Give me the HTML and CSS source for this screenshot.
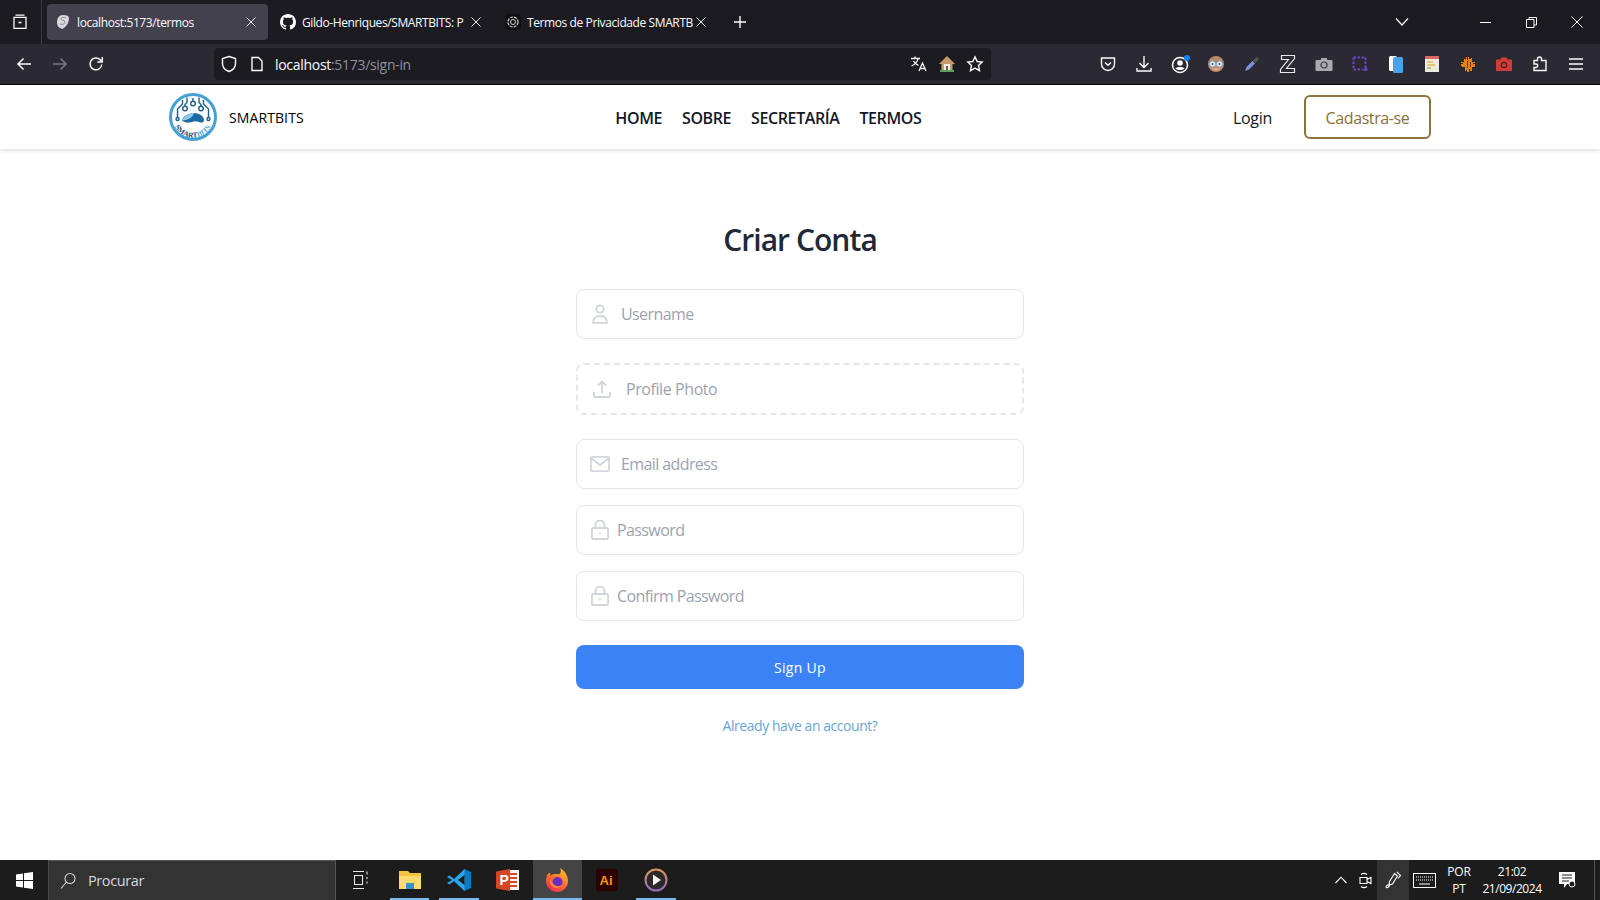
FILE: index.html
```html
<!DOCTYPE html>
<html lang="pt">
<head>
<meta charset="utf-8">
<title>SMARTBITS</title>
<link rel="stylesheet" href="styles.css">
</head>
<body>
<div class="screen">
  <header class="browser">
    <div class="tabstrip">
      <div class="tabs-menu">
        <svg width="16" height="16" viewBox="0 0 16 16" fill="none" stroke="#fbfbfe" stroke-width="1.3"><path d="M3.500 1.200h9M2 3.400h12v11H2z"/><path d="M6.500 8.500h3" stroke-width="1.600"/></svg>
      </div>
      <div class="tab tab-active">
        <svg class="fav" width="16" height="16" viewBox="0 0 16 16"><path d="M8 1c4 0 6 1 6 3 0 5-3 9-7 11-3-1-5-3-5-6 0-5 2-8 6-8z" fill="#d8d8de"/><path d="M5 10c2 1 5 0 5-2S6 7 6 5s3-2 5-1" fill="none" stroke="#8b8b93" stroke-width="1"/></svg>
        <span class="tab-title">localhost:5173/termos</span>
        <svg class="tab-close" width="10" height="10" viewBox="0 0 10 10" stroke="#e8e8ea"><path d="M.5.500l9 9M9.500.500l-9 9"/></svg>
      </div>
      <div class="tab">
        <svg class="fav" width="16" height="16" viewBox="0 0 16 16"><path fill="#fbfbfe" d="M8 0C3.58 0 0 3.58 0 8c0 3.54 2.29 6.53 5.47 7.59.4.07.55-.17.55-.38 0-.19-.01-.82-.01-1.49-2.01.37-2.53-.49-2.69-.94-.09-.23-.48-.94-.82-1.13-.28-.15-.68-.52-.01-.53.63-.01 1.08.58 1.23.82.72 1.21 1.87.87 2.33.66.07-.52.28-.87.51-1.07-1.78-.2-3.64-.89-3.64-3.95 0-.87.31-1.59.82-2.15-.08-.2-.36-1.02.08-2.12 0 0 .67-.21 2.2.82.64-.18 1.32-.27 2-.27s1.36.09 2 .27c1.53-1.04 2.2-.82 2.2-.82.44 1.1.16 1.92.08 2.12.51.56.82 1.27.82 2.15 0 3.07-1.87 3.75-3.65 3.95.29.25.54.73.54 1.48 0 1.07-.01 1.93-.01 2.2 0 .21.15.46.55.38A8.013 8.013 0 0016 8c0-4.42-3.58-8-8-8z"/></svg>
        <span class="tab-title">Gildo-Henriques/SMARTBITS: P</span>
        <svg class="tab-close" width="10" height="10" viewBox="0 0 10 10" stroke="#e8e8ea"><path d="M.5.500l9 9M9.500.500l-9 9"/></svg>
      </div>
      <div class="tab">
        <svg class="fav" width="16" height="16" viewBox="0 0 16 16"><rect width="16" height="16" rx="3" fill="#111"/><circle cx="8" cy="8" r="5" fill="none" stroke="#cfcfd4" stroke-width="1.200" stroke-dasharray="3 1"/><circle cx="8" cy="8" r="2.500" fill="none" stroke="#cfcfd4"/></svg>
        <span class="tab-title">Termos de Privacidade SMARTB</span>
        <svg class="tab-close" width="10" height="10" viewBox="0 0 10 10" stroke="#e8e8ea"><path d="M.5.500l9 9M9.500.500l-9 9"/></svg>
      </div>
      <div class="new-tab">
        <svg width="14" height="14" viewBox="0 0 14 14" stroke="#fbfbfe" stroke-width="1.400"><path d="M7 1v12M1 7h12"/></svg>
      </div>
      <div class="tab-list">
        <svg width="14" height="10" viewBox="0 0 14 10" fill="none" stroke="#fbfbfe" stroke-width="1.200"><path d="M1 1.500l6 6.500 6-6.500"/></svg>
      </div>
      <div class="win-btn"><svg width="11" height="11" viewBox="0 0 11 11" stroke="#fbfbfe"><path d="M0 5.500h11"/></svg></div>
      <div class="win-btn"><svg width="11" height="11" viewBox="0 0 11 11" fill="none" stroke="#fbfbfe"><path d="M.5 2.500h7.500v8H.5zM3 2.500V.5h7.500v7.500H8"/></svg></div>
      <div class="win-btn"><svg width="12" height="12" viewBox="0 0 12 12" stroke="#fbfbfe"><path d="M.5.500l11 11M11.500.500l-11 11"/></svg></div>
    </div>
    <div class="toolbar">
      <div class="tool-btn"><svg width="16" height="16" viewBox="0 0 16 16" fill="none" stroke="#fbfbfe" stroke-width="1.500"><path d="M15 8H2M7.500 2.500L2 8l5.500 5.500"/></svg></div>
      <div class="tool-btn"><svg width="16" height="16" viewBox="0 0 16 16" fill="none" stroke="#7b7a82" stroke-width="1.500"><path d="M1 8h13M8.500 2.500L14 8l-5.500 5.500"/></svg></div>
      <div class="tool-btn"><svg width="16" height="16" viewBox="0 0 16 16" fill="none" stroke="#fbfbfe" stroke-width="1.500"><path d="M13.800 8.500A5.900 5.900 0 1 1 12 3.600L14 5.500"/><path d="M14.300 1v5h-5"/></svg></div>
      <div class="urlbar">
        <svg class="url-shield" width="16" height="18" viewBox="0 0 16 18" fill="none" stroke="#fbfbfe" stroke-width="1.400"><path d="M8 1.500l6.500 2v5c0 4-3 6.800-6.500 8-3.500-1.200-6.500-4-6.500-8v-5z"/></svg>
        <svg class="url-page" width="14" height="16" viewBox="0 0 14 16" fill="none" stroke="#fbfbfe" stroke-width="1.400"><path d="M2 1.500h6.500l3.500 3.500v9.500H2z"/></svg>
        <span class="url-text">localhost<span class="url-dim">:5173/sign-in</span></span>
        <div class="url-actions">
          <svg width="18" height="18" viewBox="0 0 18 18" fill="none" stroke="#fbfbfe" stroke-width="1.300"><path d="M1 3.500h9M5 1.500v2M8 3.500c-.5 3-3 6-6.500 7.500M3.500 6c1 2 3 3.500 5 4.500M9 16l3.500-8 3.500 8M10.200 13.500h4.600"/></svg>
          <svg width="18" height="18" viewBox="0 0 18 18"><path d="M9 1L1 9h2.500v6h11V9H17z" fill="#c99a6b"/><path d="M6 9h6v6H6z" fill="#f4efe6"/><path d="M8 11h2v4H8z" fill="#6c5a45"/><path d="M2 15h14v2H2z" fill="#5aa35a"/></svg>
          <svg width="18" height="18" viewBox="0 0 18 18" fill="none" stroke="#fbfbfe" stroke-width="1.400"><path d="M9 1.800l2.200 4.700 5 .6-3.700 3.500 1 5L9 13.100l-4.500 2.500 1-5L1.800 7.100l5-.6z"/></svg>
        </div>
      </div>
      <div class="extensions">
        <div class="tool-btn"><svg width="16" height="16" viewBox="0 0 16 16" fill="none" stroke="#fbfbfe" stroke-width="1.400"><path d="M1.500 2h13v6a6.500 6.500 0 0 1-13 0z"/><path d="M5 6.500l3 2.800 3-2.800"/></svg></div>
        <div class="tool-btn"><svg width="18" height="18" viewBox="0 0 18 18" fill="none" stroke="#fbfbfe" stroke-width="1.400"><path d="M9 1v11M4.500 8L9 12.500 13.500 8M2 13v3h14v-3"/></svg></div>
        <div class="tool-btn ext-profile"><svg width="20" height="20" viewBox="0 0 20 20"><circle cx="9" cy="11" r="7.500" fill="none" stroke="#fbfbfe" stroke-width="1.500"/><circle cx="9" cy="9" r="2.800" fill="#fbfbfe"/><path d="M4.500 14.500c1-2 8-2 9 0-2 2-7 2-9 0z" fill="#fbfbfe"/><circle cx="16" cy="4" r="3" fill="#0a84ff"/></svg></div>
        <div class="tool-btn"><svg width="18" height="18" viewBox="0 0 18 18"><circle cx="9" cy="9" r="8" fill="#b98a6a"/><path d="M1 6h16v2H1z" fill="#8e6a55"/><circle cx="5.500" cy="9" r="3" fill="#dfeaf2" stroke="#8cb4d4"/><circle cx="12.500" cy="9" r="3" fill="#dfeaf2" stroke="#8cb4d4"/><circle cx="5.500" cy="9" r="1" fill="#556"/><circle cx="12.500" cy="9" r="1" fill="#556"/><path d="M5 14c2-1.500 6-1.500 8 0-2 2-6 2-8 0z" fill="#e2a488"/></svg></div>
        <div class="tool-btn"><svg width="16" height="16" viewBox="0 0 16 16" fill="none"><path d="M1 15l1.500-4 6-6 2.500 2.500-6 6z" fill="#7f8fe0"/><path d="M9 4.500L13 1l2 2-3.500 4z" fill="#55555c"/></svg></div>
        <div class="tool-btn"><svg width="18" height="20" viewBox="0 0 18 20" fill="none" stroke="#e8e8ea" stroke-width="1.200"><path d="M2.500 1.500h13v3l-8 10h8v4h-14v-3l8-10h-7z"/></svg></div>
        <div class="tool-btn"><svg width="18" height="14" viewBox="0 0 18 14"><path d="M1.500 3h4l1-2h5l1 2h4a1 1 0 0 1 1 1v9a1 1 0 0 1-1 1h-15a1 1 0 0 1-1-1V4a1 1 0 0 1 1-1z" fill="#a9a9af"/><circle cx="9" cy="8" r="3" fill="none" stroke="#3b3a42" stroke-width="1.200"/></svg></div>
        <div class="tool-btn"><svg width="16" height="16" viewBox="0 0 16 16" fill="none" stroke="#6b45c9" stroke-width="2"><path d="M1.500 1.500h12v10" stroke-dasharray="2.500 1.500"/><path d="M1.500 1.500v12h9" stroke-dasharray="2.500 1.500"/><path d="M13.500 11v4M11.500 13.500h4"/></svg></div>
        <div class="tool-btn"><svg width="14" height="18" viewBox="0 0 14 18"><rect x="0" y="1" width="8" height="15" rx="1.500" fill="#fbfbfe"/><rect x="4" y="2" width="10" height="16" rx="1.500" fill="#4aa3ea"/></svg></div>
        <div class="tool-btn"><svg width="14" height="16" viewBox="0 0 14 16"><rect width="14" height="16" fill="#efeae0"/><path d="M0 0h14v3H0z" fill="#d9695f"/><path d="M2 6h6M2 9h8" stroke="#e2b94f" stroke-width="1.500"/><path d="M2 12h4" stroke="#8dbb6b" stroke-width="1.500"/></svg></div>
        <div class="tool-btn"><svg width="14" height="16" viewBox="0 0 14 16"><path d="M5 1h1v3h1V1h1v2h2V2h1v4h3v1h-2v1h2v3h-3v4H9v-2H8v3H6v-2H5v1H4v-4H1v-1H0V8h2V7H0V6h3V3h2z" fill="#e8820e"/><path d="M6 5h1v7H6zM9 6h1v5H9z" fill="#6b3a0a"/></svg></div>
        <div class="tool-btn"><svg width="16" height="14" viewBox="0 0 16 14"><path d="M1 2.500h3.500l1-2h5l1 2H15a1 1 0 0 1 1 1V13a1 1 0 0 1-1 1H1a1 1 0 0 1-1-1V3.500a1 1 0 0 1 1-1z" fill="#d23c36"/><circle cx="8" cy="8" r="2.600" fill="none" stroke="#4a1f1f" stroke-width="1.200"/></svg></div>
        <div class="tool-btn"><svg width="16" height="18" viewBox="0 0 16 18" fill="none" stroke="#fbfbfe" stroke-width="1.400"><path d="M2 5.500h3.500V4a2 2 0 0 1 4 0v1.500H14v10H2v-3h2a1.700 1.700 0 0 0 0-3.500H2z"/></svg></div>
        <div class="tool-btn"><svg width="16" height="14" viewBox="0 0 16 14" stroke="#fbfbfe" stroke-width="1.400"><path d="M1 2h14M1 7h14M1 12h14"/></svg></div>
      </div>
    </div>
  </header>

  <nav class="site-nav">
    <a class="brand">
      <svg class="brand-logo" width="48" height="48" viewBox="0 0 48 48">
        <circle cx="24" cy="24" r="22.500" fill="#fff" stroke="#45a0d4" stroke-width="3"/>
        <g fill="none" stroke="#1f5f8a" stroke-width="1.400">
          <path d="M8.500 24v-8l5-5V7M39.500 24v-8l-5-5V7"/>
          <path d="M24 5v3M18 4.500v5l-2 2v1.500M30 4.500v5l2 2v1.500"/>
          <circle cx="16" cy="15.500" r="2.300"/><circle cx="32" cy="15.500" r="2.300"/><circle cx="24" cy="10.500" r="2.300"/>
          <circle cx="8.500" cy="26" r="1.500"/><circle cx="39.500" cy="26" r="1.500"/>
        </g>
        <path d="M13 27c2-5 8-7 12-7 5 0 10 3 10 7 0 3-3 3-5 2-3-1-5-1-7 0-4 1-8 1-10-2z" fill="#1e6aa5"/>
        <path d="M13 27c3-5 8-7 12-7-1 4-6 8-12 7z" fill="#8ccbec"/>
        <defs><path id="logo-arc" d="M4 29a20.600 20.600 0 0 0 40 0"/></defs>
        <text class="logo-text"><textPath href="#logo-arc" startOffset="50%">SMART<tspan class="logo-text-light">BITS</tspan></textPath></text>
      </svg>
      <span class="brand-name">SMARTBITS</span>
    </a>
    <ul class="nav-links">
      <li>HOME</li>
      <li>SOBRE</li>
      <li>SECRETARÍA</li>
      <li>TERMOS</li>
    </ul>
    <div class="nav-auth">
      <a class="login">Login</a>
      <a class="signup">Cadastra-se</a>
    </div>
  </nav>

  <main class="page">
    <h1 class="page-title">Criar Conta</h1>
    <form class="form">
      <label class="field field-user">
        <svg class="field-icon" width="16" height="20" viewBox="0 0 16 20" fill="none" stroke="#d1d5db" stroke-width="1.800"><circle cx="8" cy="5" r="3.700"/><path d="M1 18.800c0-4.500 3-6.800 7-6.800s7 2.300 7 6.800z"/></svg>
        <input class="field-input" type="text" placeholder="Username">
      </label>
      <label class="field field-dashed">
        <svg class="field-icon" width="18" height="18" viewBox="0 0 18 18" fill="none" stroke="#d1d5db" stroke-width="1.800"><path d="M9 13V2M5 5.500L9 1.500l4 4M1 12v3.500a1.500 1.500 0 0 0 1.500 1.500h13a1.500 1.500 0 0 0 1.500-1.500V12"/></svg>
        <span class="field-label">Profile Photo</span>
      </label>
      <label class="field field-mail">
        <svg class="field-icon" width="20" height="16" viewBox="0 0 20 16" fill="none" stroke="#d1d5db" stroke-width="1.800"><rect x=".9" y=".9" width="18.200" height="14.200" rx="1.500"/><path d="M1 2l9 7 9-7"/></svg>
        <input class="field-input" type="email" placeholder="Email address">
      </label>
      <label class="field field-lock">
        <svg class="field-icon" width="18" height="20" viewBox="0 0 18 20" fill="none" stroke="#d1d5db" stroke-width="1.800"><rect x=".9" y="8" width="16.200" height="11" rx="1.500"/><path d="M4.500 8V5a4.500 4.500 0 0 1 9 0v3M9 12.500v2"/></svg>
        <input class="field-input" type="password" placeholder="Password">
      </label>
      <label class="field field-lock">
        <svg class="field-icon" width="18" height="20" viewBox="0 0 18 20" fill="none" stroke="#d1d5db" stroke-width="1.800"><rect x=".9" y="8" width="16.200" height="11" rx="1.500"/><path d="M4.500 8V5a4.500 4.500 0 0 1 9 0v3M9 12.500v2"/></svg>
        <input class="field-input" type="password" placeholder="Confirm Password">
      </label>
      <button class="submit" type="button">Sign Up</button>
    </form>
    <a class="account-link">Already have an account?</a>
  </main>

  <footer class="taskbar">
    <div class="start">
      <svg width="17" height="17" viewBox="0 0 17 17" fill="#fff"><path d="M0 2.400L7 1.400v6.600H0zM8 1.300L17 0v8H8zM0 9h7v6.600L0 14.600zM8 9h9v8l-9-1.300z"/></svg>
    </div>
    <div class="search">
      <svg width="16" height="18" viewBox="0 0 16 18" fill="none" stroke="#d8d8d8" stroke-width="1.100"><circle cx="10" cy="6.500" r="5"/><path d="M6.500 10L1 16.500"/></svg>
      <span>Procurar</span>
    </div>
    <div class="task-view">
      <svg width="18" height="18" viewBox="0 0 18 18" fill="none" stroke="#e6e6e6" stroke-width="1.100"><path d="M1 .5h11M1 17.500h11M2.500 4.500h8v9h-8zM15 .5v3M15 6v2M15 10.500v2"/></svg>
    </div>
    <div class="apps">
      <div class="app app-on">
        <svg width="24" height="22" viewBox="0 0 24 22"><path d="M1 2h9l2 2h11v16H1z" fill="#f5c33b"/><path d="M1 7h22v13H1z" fill="#fadb70"/><path d="M8 14h8v6H8z" fill="#3a8fd0"/></svg>
      </div>
      <div class="app app-on">
        <svg width="24" height="24" viewBox="0 0 24 24"><path d="M17.500 1L24 4v16l-6.500 3L7 13z" fill="#0a7cc8"/><path d="M17.500 1L7 11 2.500 7.500 0 9l5 3-5 3 2.500 1.500L7 13l10.500 10V1z" fill="#2ba5ec"/><path d="M17.500 7v10L11 12z" fill="#1c1c1c"/></svg>
      </div>
      <div class="app">
        <svg width="24" height="24" viewBox="0 0 24 24"><path d="M10 2h13v20H10z" fill="#f6f1ee"/><path d="M14 6h7M14 10h7M14 14h7M14 18h7" stroke="#d24726" stroke-width="2"/><path d="M0 3.500L14 1v22L0 20.500z" fill="#d24726"/><text class="ppt-letter" x="3.500" y="17">P</text></svg>
      </div>
      <div class="app app-active app-on">
        <svg width="24" height="26" viewBox="0 0 24 26">
          <defs>
            <linearGradient id="fx-body" x1="0.800" y1="0" x2="0.200" y2="1"><stop offset="0" stop-color="#ffc22e"/><stop offset=".55" stop-color="#ff6a2a"/><stop offset="1" stop-color="#e8285f"/></linearGradient>
          </defs>
          <path d="M2 8c-.5 2-1 3.500-1 6a11 11 0 0 0 22 0c0-5-3-10-8-13 1.500 3 1 5-1 6.500C11 6.500 7 7 5 9c0-1 .3-2.500.8-3.500C4 6 2.800 7 2 8z" fill="url(#fx-body)"/>
          <circle cx="12.500" cy="15" r="5" fill="#6a2fc2"/>
          <path d="M6 12c1 6 6 9 11 6-2 4-9 4-11.500-.5C4.500 16 5 14 6 12z" fill="#ff8a2a"/>
        </svg>
      </div>
      <div class="app">
        <svg width="22" height="22" viewBox="0 0 22 22"><rect width="22" height="22" rx="3" fill="#2b0000"/><text class="ai-letter" x="3.500" y="16">Ai</text></svg>
      </div>
      <div class="app app-on">
        <svg width="24" height="24" viewBox="0 0 24 24"><defs><linearGradient id="play-ring" x1="0" y1="0" x2="0" y2="1"><stop offset="0" stop-color="#e0955a"/><stop offset="1" stop-color="#9a6cc4"/></linearGradient></defs><circle cx="12" cy="12" r="10.500" fill="#2a2a2a" stroke="url(#play-ring)" stroke-width="2"/><path d="M9 6.500l8 5.500-8 5.500z" fill="#f2f2f2"/></svg>
      </div>
    </div>
    <div class="tray">
      <div class="tray-item tray-chevron"><svg width="12" height="8" viewBox="0 0 12 8" fill="none" stroke="#fff" stroke-width="1.100"><path d="M.5 7L6 1.200 11.500 7"/></svg></div>
      <div class="tray-item tray-cam"><svg width="13" height="17" viewBox="0 0 13 17" fill="none" stroke="#fff" stroke-width="1.100"><path d="M1 5.500h7v6H1zM8 7.500l4-2v6l-4-2M2 2.500c2-1.500 4-1.500 6 0M2 14.500c2 1.500 4 1.500 6 0"/></svg></div>
      <div class="tray-item tray-pen"><svg width="17" height="18" viewBox="0 0 17 18" fill="none" stroke="#fff" stroke-width="1.100"><path d="M9.500 2.500l3 2.500-5 8-3.500 1 .5-3.500zM12 1l3.500 3.500-2.500 3M1 16.500c.5-3 2-2 2.500-3M1 16.500c1.500.5 3-.5 3.500-2"/></svg></div>
      <div class="tray-item tray-keys"><svg width="23" height="15" viewBox="0 0 23 15" fill="none" stroke="#fff"><rect x=".5" y=".5" width="22" height="14"/><path d="M3 4h17M3 7h17" stroke-dasharray="1 1"/><path d="M6 11h11"/></svg></div>
      <div class="tray-item tray-lang"><span>POR</span><span>PT</span></div>
      <div class="tray-item tray-clock"><span>21:02</span><span>21/09/2024</span></div>
      <div class="tray-item tray-note"><svg width="17" height="17" viewBox="0 0 17 17"><path d="M0 0h16v12h-8l-3 4v-4H0z" fill="#fff"/><path d="M3 3h10M3 6h10M3 9h7" stroke="#1c1c1c"/><circle cx="13" cy="12" r="3" fill="#1c1c1c" stroke="#fff"/></svg></div>
      <div class="tray-end"></div>
    </div>
  </footer>
</div>
</body>
</html>
```

FILE: styles.css
```css
* { box-sizing: border-box; }
html, body { margin: 0; height: 100%; }
body { font-family: "Open Sans", "Noto Sans", sans-serif; background: #fff; overflow: hidden; }
.screen { display: flex; flex-direction: column; height: 900px; width: 1600px; }

/* Browser chrome */
.browser { flex: none; color: #fbfbfe; }
.tabstrip { height: 44px; background: #1c1b22; display: flex; align-items: center; }
.tabs-menu { width: 42px; height: 44px; padding-right: 2px; border-right: 1px solid #3a3a42; display: flex; align-items: center; justify-content: center; }
.tab { width: 221px; height: 36px; margin-left: 5px; border-radius: 4px; display: flex; align-items: center; padding-left: 8px; font-family: "Open Sans", sans-serif; font-size: 12px; }
.tab + .tab { margin-left: 4px; }
.tab-active { background: #42414d; }
.tab .fav { flex: none; margin-right: 6px; }
.tab-title { width: 168px; white-space: nowrap; overflow: hidden; letter-spacing: -0.4px; }
.tab-close { flex: none; margin-left: 1px; }
.new-tab { width: 32px; height: 32px; margin-left: 6px; display: flex; align-items: center; justify-content: center; }
.tab-list { width: 36px; height: 32px; margin-left: auto; margin-right: 42px; display: flex; align-items: center; justify-content: center; }
.win-btn { width: 46px; height: 44px; display: flex; align-items: center; justify-content: center; }

.toolbar { height: 41px; background: #2b2a33; border-bottom: 1px solid #0c0c0d; padding: 0 6px; display: flex; align-items: center; }
.tool-btn { width: 36px; height: 36px; flex: none; display: flex; align-items: center; justify-content: center; }
.ext-profile { padding-left: 1px; }
.urlbar { width: 777px; height: 32px; margin-left: 100px; background: #1c1b22; border-radius: 4px; display: flex; align-items: center; padding-left: 7px; font-size: 14px; }
.url-shield { flex: none; }
.url-page { flex: none; margin-left: 13px; }
.url-text { margin-left: 11px; letter-spacing: -0.3px; }
.url-dim { color: #8f8f9d; }
.url-actions { margin-left: auto; display: flex; gap: 10px; padding-right: 7px; }
.extensions { margin-left: auto; display: flex; }

/* Site nav */
.site-nav { flex: none; height: 64px; padding: 0 169px; display: flex; align-items: center; justify-content: space-between; background: #fff; box-shadow: 0 2px 4px rgba(0, 0, 0, .12); position: relative; }
.brand { display: flex; align-items: center; gap: 12px; }
.brand-logo { flex: none; }
.logo-text { font-family: "Liberation Serif", serif; font-weight: 700; font-size: 7.500px; fill: #17476e; text-anchor: middle; }
.logo-text-light { fill: #5aa9d6; }
.brand-name { font-size: 14px; color: #000; letter-spacing: 0.1px; }
.nav-links { list-style: none; margin: 2px 0 0; padding: 0; display: flex; gap: 20px; font-size: 16px; font-weight: 600; color: #111827; letter-spacing: -0.4px; }
.nav-auth { display: flex; align-items: center; gap: 32px; }
.login { margin-top: 2px; font-size: 16px; color: #111827; letter-spacing: -0.3px; }
.signup { height: 44px; width: 127px; padding-top: 1px; border: 2px solid #8b7340; border-radius: 6px; display: flex; align-items: center; justify-content: center; color: #8b6f35; font-size: 16px; letter-spacing: -0.4px; }

/* Form page */
.page { flex: 1; display: flex; flex-direction: column; align-items: center; padding-top: 73px; }
.page-title { margin: 0 0 31px; font-size: 30px; line-height: 36px; font-weight: 600; color: #1f2937; letter-spacing: -0.95px; }
.form { width: 448px; display: flex; flex-direction: column; }
.field { height: 50px; border: 1px solid #e5e7eb; border-radius: 8px; display: flex; align-items: center; background: #fff; }
.field-icon { flex: none; }
.field-user { padding-left: 15px; }
.field-user .field-input { margin-left: 13px; }
.field-dashed { height: 52px; margin-top: 24px; border: 2px dashed #e5e7eb; padding-left: 15px; }
.field-dashed .field-label { margin-left: 15px; }
.field-mail { margin-top: 24px; padding-left: 13px; }
.field-mail .field-input { margin-left: 11px; }
.field-lock { margin-top: 16px; padding-left: 14px; }
.field-lock .field-input { margin-left: 8px; }
.field-input { flex: 1; min-width: 0; border: 0; outline: 0; padding: 0; background: transparent; font: inherit; font-size: 16px; letter-spacing: -0.6px; color: #111827; }
.field-input::placeholder { color: #9ca3af; opacity: 1; }
.field-label { font-size: 16px; letter-spacing: -0.42px; color: #9ca3af; }
.submit { height: 44px; margin-top: 24px; border: 0; border-radius: 8px; background: #3b82f6; color: #fff; font: inherit; font-size: 14px; letter-spacing: .3px; }
.account-link { margin-top: 27px; font-size: 14px; line-height: 20px; color: #6ba4d4; letter-spacing: -0.45px; }

/* Windows taskbar */
.taskbar { flex: none; height: 40px; background: #1c1c1c; display: flex; align-items: stretch; color: #fff; }
.start { width: 48px; display: flex; align-items: center; justify-content: center; }
.search { width: 288px; background: #333; border: 1px solid #555; border-bottom: 0; border-left: 1px solid #4a4a4a; display: flex; align-items: center; gap: 12px; padding-left: 11px; font-size: 14.500px; color: #d8d8d8; letter-spacing: -0.4px; }
.task-view { width: 49px; display: flex; align-items: center; justify-content: center; }
.apps { display: flex; }
.app { width: 49.250px; display: flex; align-items: center; justify-content: center; position: relative; }
.app-on::after { content: ""; position: absolute; left: 5px; right: 5px; bottom: 0; height: 2px; background: #76b9ed; }
.app-active { background: #444; }
.app-active::after { left: 0; right: 0; }
.ppt-letter { font-family: "Liberation Sans", sans-serif; font-size: 14px; font-weight: 700; fill: #fff; }
.ai-letter { font-family: "Liberation Sans", sans-serif; font-size: 13px; font-weight: 700; fill: #ff9a00; }
.tray { margin-left: auto; display: flex; }
.tray-item { display: flex; flex-direction: column; align-items: center; justify-content: center; font-size: 12px; line-height: 17px; letter-spacing: -0.2px; }
.tray-chevron { width: 26px; }
.tray-cam { width: 23px; }
.tray-pen { width: 32px; background: #333; }
.tray-keys { width: 30px; }
.tray-lang { width: 40px; }
.tray-clock { width: 66px; letter-spacing: -0.45px; }
.tray-note { width: 44px; }
.tray-end { width: 11px; position: relative; }
.tray-end::before { content: ""; position: absolute; left: 5px; top: 0; bottom: 0; width: 1px; background: #555; }
```
